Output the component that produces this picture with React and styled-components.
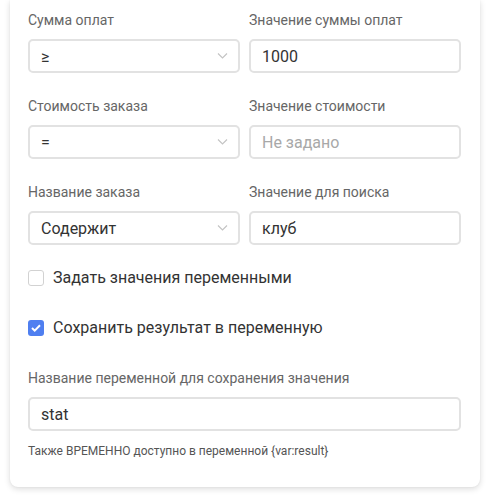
import React from "react";
import styled, { createGlobalStyle } from "styled-components";

const Global = createGlobalStyle`
  body {
    margin: 0;
    background: #ffffff;
    font-family: Roboto, "Liberation Sans", sans-serif;
  }
`;

const Page = styled.div`
  padding: 0 9px 9px 10px;
`;

const Card = styled.div`
  background: #fff;
  border-radius: 0 0 8px 8px;
  box-shadow: 0 2px 6px rgba(0, 0, 0, 0.14), 0 0 2px rgba(0, 0, 0, 0.06);
  padding: 10px 19px 28px 18px;
`;

const Grid = styled.div`
  display: grid;
  grid-template-columns: 1fr 1fr;
  column-gap: 9px;
  row-gap: 23px;
`;

const Field = styled.div`
  display: flex;
  flex-direction: column;
  gap: 9px;
`;

const Label = styled.div`
  font-size: 14px;
  line-height: 20px;
  color: #666;
`;

const Box = styled.div`
  position: relative;
  box-sizing: border-box;
  height: 34px;
  border: 2px solid #e2e2e2;
  border-radius: 5px;
  display: flex;
  align-items: center;
  padding: 0 11px;
  font-size: 16px;
  color: ${(p) => (p.$placeholder ? "#a8a8a8" : "#333")};
`;

const Chevron = styled.svg`
  position: absolute;
  right: 10px;
  top: 11px;
`;

const Check = styled.label`
  display: flex;
  align-items: center;
  gap: 9px;
  font-size: 16px;
  line-height: 24px;
  color: #333;
  margin-top: ${(p) => p.$top}px;
`;

const Square = styled.span`
  box-sizing: border-box;
  width: 16px;
  height: 16px;
  border-radius: 3px;
  border: ${(p) => (p.$on ? "none" : "1px solid #d2d2d2")};
  background: ${(p) => (p.$on ? "#4f7ff0" : "#fff")};
  display: flex;
  align-items: center;
  justify-content: center;
`;

const Section = styled.div`
  margin-top: 28px;
  display: flex;
  flex-direction: column;
  gap: 9px;
`;

const Hint = styled.div`
  font-size: 12px;
  line-height: 16px;
  color: #555;
  margin-top: 3px;
`;

function Select({ value }) {
  return (
    <Box>
      {value}
      <Chevron width="11" height="8" viewBox="0 0 11 8">
        <path d="M1 1.5l4.5 4.5L10 1.5" fill="none" stroke="#c4c4c4" strokeWidth="1.2" />
      </Chevron>
    </Box>
  );
}

function Checkbox({ on, top, children }) {
  return (
    <Check $top={top}>
      <Square $on={on}>
        {on && (
          <svg width="10" height="8" viewBox="0 0 10 8">
            <path d="M1 4l2.7 2.6L9 1.3" fill="none" stroke="#fff" strokeWidth="2" />
          </svg>
        )}
      </Square>
      {children}
    </Check>
  );
}

const rows = [
  ["Сумма оплат", "≥", "Значение суммы оплат", "1000"],
  ["Стоимость заказа", "=", "Значение стоимости", ""],
  ["Название заказа", "Содержит", "Значение для поиска", "клуб"],
];

export default function App() {
  return (
    <>
      <Global />
      <Page>
        <Card>
          <Grid>
            {rows.map(([l1, v1, l2, v2]) => (
              <React.Fragment key={l1}>
                <Field>
                  <Label>{l1}</Label>
                  <Select value={v1} />
                </Field>
                <Field>
                  <Label>{l2}</Label>
                  <Box $placeholder={!v2}>{v2 || "Не задано"}</Box>
                </Field>
              </React.Fragment>
            ))}
          </Grid>
          <Checkbox top={21}>Задать значения переменными</Checkbox>
          <Checkbox on top={26}>Сохранить результат в переменную</Checkbox>
          <Section>
            <Label>Название переменной для сохранения значения</Label>
            <Box>stat</Box>
            <Hint>Также ВРЕМЕННО доступно в переменной {"{var:result}"}</Hint>
          </Section>
        </Card>
      </Page>
    </>
  );
}
